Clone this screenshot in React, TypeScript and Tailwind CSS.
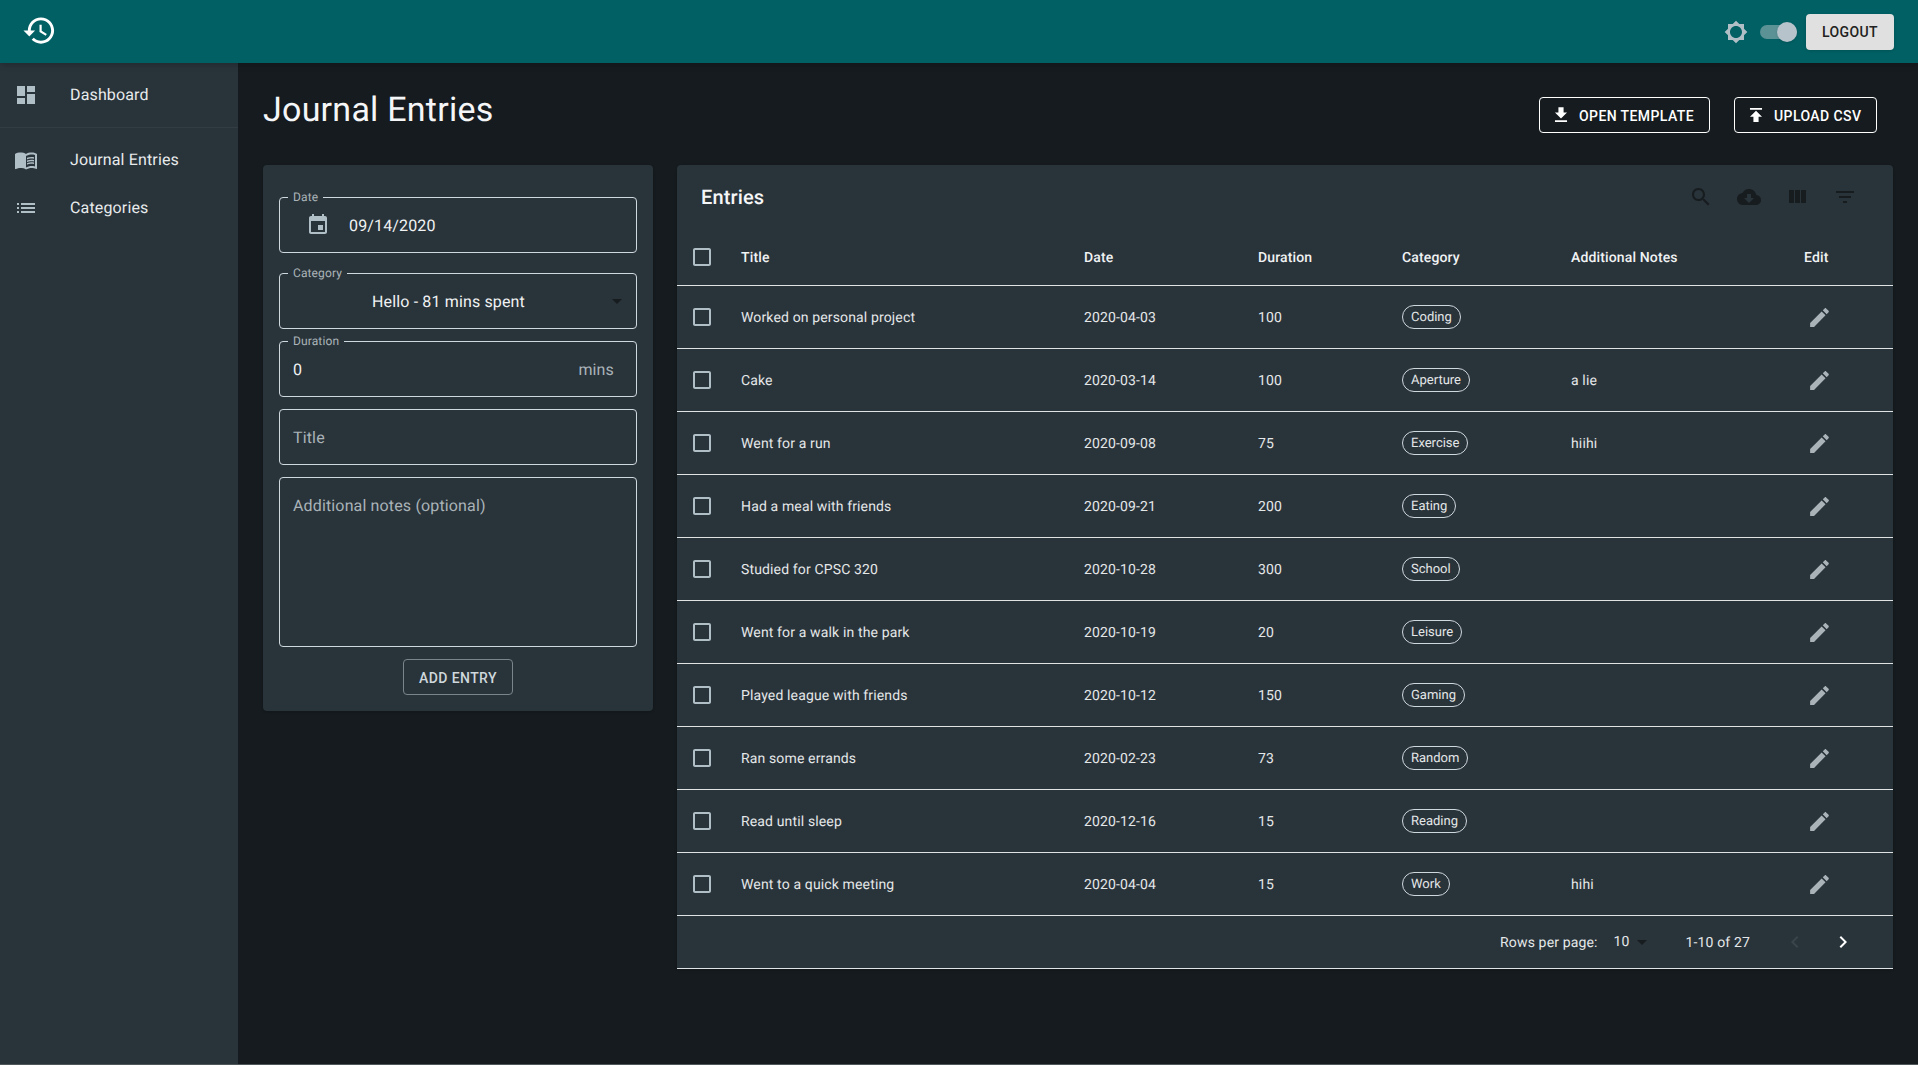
import { ReactNode } from 'react';

const paths = {
  history:
    'M13 3c-4.97 0-9 4.03-9 9H1l3.89 3.89.07.14L9 12H6c0-3.87 3.13-7 7-7s7 3.13 7 7-3.13 7-7 7c-1.93 0-3.68-.79-4.94-2.06l-1.42 1.42C8.27 19.99 10.51 21 13 21c4.97 0 9-4.03 9-9s-4.03-9-9-9zm-1 5v5l4.28 2.54.72-1.21-3.5-2.08V8H12z',
  dashboard: 'M3 13h8V3H3v10zm0 8h8v-6H3v6zm10 0h8V11h-8v10zm0-18v6h8V3h-8z',
  book: 'M21 5c-1.11-.35-2.33-.5-3.5-.5-1.95 0-4.05.4-5.5 1.5-1.45-1.1-3.55-1.5-5.5-1.5S2.45 4.9 1 6v14.65c0 .25.25.5.5.5.1 0 .15-.05.25-.05C3.1 20.45 5.05 20 6.5 20c1.95 0 4.05.4 5.5 1.5 1.35-.85 3.8-1.5 5.5-1.5 1.65 0 3.35.3 4.75 1.05.1.05.15.05.25.05.25 0 .5-.25.5-.5V6c-.6-.45-1.25-.75-2-1zm0 13.5c-1.1-.35-2.3-.5-3.5-.5-1.7 0-4.15.65-5.5 1.5V8c1.35-.85 3.8-1.5 5.5-1.5 1.2 0 2.4.15 3.5.5v11.5z M17.5 10.5c.88 0 1.73.09 2.5.26V9.24c-.79-.15-1.64-.24-2.5-.24-1.7 0-3.24.29-4.5.83v1.66c1.13-.64 2.7-.99 4.5-.99zM13 12.49v1.66c1.13-.64 2.7-.99 4.5-.99.88 0 1.73.09 2.5.26V11.9c-.79-.15-1.64-.24-2.5-.24-1.7 0-3.24.3-4.5.83zM17.5 14.33c-1.7 0-3.24.29-4.5.83v1.66c1.13-.64 2.7-.99 4.5-.99.88 0 1.73.09 2.5.26v-1.52c-.79-.16-1.64-.24-2.5-.24z',
  list: 'M3 13h2v-2H3v2zm0 4h2v-2H3v2zm0-8h2V7H3v2zm4 4h14v-2H7v2zm0 4h14v-2H7v2zM7 7v2h14V7H7z',
  brightness:
    'M20 15.31L23.31 12 20 8.69V4h-4.69L12 .69 8.69 4H4v4.69L.69 12 4 15.31V20h4.69L12 23.31 15.31 20H20v-4.69zM12 18c-3.31 0-6-2.69-6-6s2.69-6 6-6 6 2.69 6 6-2.69 6-6 6z',
  getApp: 'M19 9h-4V3H9v6H5l7 7 7-7zM5 18v2h14v-2H5z',
  publish: 'M5 4v2h14V4H5zm0 10h4v6h6v-6h4l-7-7-7 7z',
  search:
    'M15.5 14h-.79l-.28-.27C15.41 12.59 16 11.11 16 9.5 16 5.91 13.09 3 9.5 3S3 5.91 3 9.5 5.91 16 9.5 16c1.61 0 3.09-.59 4.23-1.57l.27.28v.79l5 4.99L20.49 19l-4.99-5zm-6 0C7.01 14 5 11.99 5 9.5S7.01 5 9.5 5 14 7.01 14 9.5 11.99 14 9.5 14z',
  cloud:
    'M19.35 10.04C18.67 6.59 15.64 4 12 4 9.11 4 6.6 5.64 5.35 8.04 2.34 8.36 0 10.91 0 14c0 3.31 2.69 6 6 6h13c2.76 0 5-2.24 5-5 0-2.64-2.05-4.78-4.65-4.96zM17 13l-5 5-5-5h3V9h4v4h3z',
  columns: 'M10 18h5V5h-5v13zm-6 0h5V5H4v13zM16 5v13h5V5h-5z',
  filter: 'M10 18h4v-2h-4v2zM3 6v2h18V6H3zm3 7h12v-2H6v2z',
  edit: 'M3 17.25V21h3.75L17.81 9.94l-3.75-3.75L3 17.25zM20.71 7.04c.39-.39.39-1.02 0-1.41l-2.34-2.34c-.39-.39-1.02-.39-1.41 0l-1.83 1.83 3.75 3.75 1.83-1.83z',
  event:
    'M17 12h-5v5h5v-5zM16 1v2H8V1H6v2H5c-1.11 0-1.99.9-1.99 2L3 19c0 1.1.89 2 2 2h14c1.1 0 2-.9 2-2V5c0-1.1-.9-2-2-2h-1V1h-2zm3 18H5V8h14v11z',
  checkbox:
    'M19 5v14H5V5h14m0-2H5c-1.1 0-2 .9-2 2v14c0 1.1.9 2 2 2h14c1.1 0 2-.9 2-2V5c0-1.1-.9-2-2-2z',
  dropdown: 'M7 10l5 5 5-5z',
  chevronLeft: 'M15.41 7.41L14 6l-6 6 6 6 1.41-1.41L10.83 12z',
  chevronRight: 'M10 6L8.59 7.41 13.17 12l-4.58 4.58L10 18l6-6z',
};

function Icon({ name, className }: { name: keyof typeof paths; className?: string }) {
  return (
    <svg viewBox="0 0 24 24" fill="currentColor" className={className ?? 'h-6 w-6 shrink-0'}>
      <path d={paths[name]} />
    </svg>
  );
}

const entries = [
  { title: 'Worked on personal project', date: '2020-04-03', duration: 100, category: 'Coding', notes: '' },
  { title: 'Cake', date: '2020-03-14', duration: 100, category: 'Aperture', notes: 'a lie' },
  { title: 'Went for a run', date: '2020-09-08', duration: 75, category: 'Exercise', notes: 'hiihi' },
  { title: 'Had a meal with friends', date: '2020-09-21', duration: 200, category: 'Eating', notes: '' },
  { title: 'Studied for CPSC 320', date: '2020-10-28', duration: 300, category: 'School', notes: '' },
  { title: 'Went for a walk in the park', date: '2020-10-19', duration: 20, category: 'Leisure', notes: '' },
  { title: 'Played league with friends', date: '2020-10-12', duration: 150, category: 'Gaming', notes: '' },
  { title: 'Ran some errands', date: '2020-02-23', duration: 73, category: 'Random', notes: '' },
  { title: 'Read until sleep', date: '2020-12-16', duration: 15, category: 'Reading', notes: '' },
  { title: 'Went to a quick meeting', date: '2020-04-04', duration: 15, category: 'Work', notes: 'hihi' },
];

const rowGrid = 'grid grid-cols-[64px_343px_174px_144px_169px_233px_1fr] items-center';

function Field({ label, className, children }: { label?: string; className: string; children?: ReactNode }) {
  return (
    <div className={`relative rounded border border-[#cfd8dc] ${className}`}>
      {label && (
        <span className="absolute -top-[8px] left-[8px] bg-[#29333a] px-[5px] text-xs leading-[14px] tracking-[0.01em] text-[#a9b3b8]">
          {label}
        </span>
      )}
      {children}
    </div>
  );
}

function NavItem({ icon, text, className }: { icon: keyof typeof paths; text: string; className: string }) {
  return (
    <div className={`flex items-center pl-[14px] ${className}`}>
      <Icon name={icon} className="h-6 w-6 shrink-0 text-[#b0bec5]" />
      <span className="ml-[32px] text-base tracking-[0.009em] text-[#e8ebec]">{text}</span>
    </div>
  );
}

function OutlineButton({ icon, text, className }: { icon: keyof typeof paths; text: string; className: string }) {
  return (
    <button className={`flex h-[36px] items-center rounded border border-white pl-[12px] text-sm font-medium tracking-[0.029em] text-white ${className}`}>
      <Icon name={icon} className="mr-[9px] h-[18px] w-[18px] shrink-0 scale-[1.15]" />
      <span className="pt-[2px]">{text}</span>
    </button>
  );
}

function EntryRow({ entry }: { entry: (typeof entries)[number] }) {
  return (
    <div className={`${rowGrid} h-[63px] border-b border-[#e0e3e4] text-sm tracking-[0.01em] text-[#e4e7e8]`}>
      <div className="pl-[13px]">
        <Icon name="checkbox" className="h-6 w-6 text-[#b0bec5]" />
      </div>
      <div className="pt-[2px]">{entry.title}</div>
      <div className="pt-[2px]">{entry.date}</div>
      <div className="pt-[2px]">{entry.duration}</div>
      <div>
        <span className="inline-flex h-[24px] items-center rounded-full border border-[#cfd8dc] px-[8px] text-[13px] leading-none tracking-normal">
          {entry.category}
        </span>
      </div>
      <div className="pt-[2px]">{entry.notes}</div>
      <div className="pl-[3px]">
        <Icon name="edit" className="h-[25px] w-[25px] text-[#a9b3b8]" />
      </div>
    </div>
  );
}

export default function App() {
  return (
    <div className="flex min-h-[1065px] flex-col border-b border-[#50575a] bg-[#151b1e] font-['Roboto',sans-serif] [text-rendering:geometricPrecision]">
      <header className="z-10 flex h-[63px] items-center justify-between bg-[#006064] pl-[22px] pr-[24px] shadow-md">
        <Icon name="history" className="mb-[3px] h-[35px] w-[35px] text-white" />
        <div className="flex items-center">
          <Icon name="brightness" className="h-6 w-6 text-[#b0bec5]" />
          <div className="relative ml-[12px] mr-[9px] h-[14px] w-[37px] rounded-full bg-[#5b9296]">
            <span className="absolute -top-[3px] right-0 h-[20px] w-[20px] rounded-full bg-[#b6c3ca] shadow" />
          </div>
          <button className="h-[36px] w-[88px] rounded bg-[#e0e0e0] text-sm font-medium tracking-[0.029em] text-[#212121] shadow">
            LOGOUT
          </button>
        </div>
      </header>

      <div className="flex flex-1">
        <aside className="w-[238px] shrink-0 bg-[#29333a]">
          <NavItem icon="dashboard" text="Dashboard" className="h-[65px] border-b border-[#323c42]" />
          <div className="pt-[8px]">
            <NavItem icon="book" text="Journal Entries" className="h-[48px]" />
            <NavItem icon="list" text="Categories" className="h-[48px]" />
          </div>
        </aside>

        <main className="flex-1 px-[25px]">
          <div className="flex h-[102px] items-start justify-between">
            <h1 className="pt-[24px] text-[34px] leading-[46px] tracking-[0.007em] text-[#f5f6f7]">Journal Entries</h1>
            <div className="flex gap-[24px] pt-[34px] pr-[16px]">
              <OutlineButton icon="getApp" text="OPEN TEMPLATE" className="w-[171px]" />
              <OutlineButton icon="publish" text="UPLOAD CSV" className="w-[143px]" />
            </div>
          </div>

          <div className="flex items-start gap-[24px]">
            <section className="flex w-[390px] shrink-0 flex-col rounded bg-[#29333a] px-[16px] pb-[16px] pt-[32px] shadow">
              <Field label="Date" className="flex h-[56px] items-center pl-[26px]">
                <Icon name="event" className="h-6 w-6 text-[#b0bec5]" />
                <span className="ml-[19px] pt-[2px] text-base tracking-[0.009em] text-[#f0f2f3]">09/14/2020</span>
              </Field>
              <Field label="Category" className="mt-[20px] flex h-[56px] items-center pl-[92px]">
                <span className="pt-[2px] text-base tracking-[0.009em] text-[#f0f2f3]">Hello - 81 mins spent</span>
                <Icon name="dropdown" className="absolute right-[7px] top-[15px] h-6 w-6 text-[#171c1f]" />
              </Field>
              <Field label="Duration" className="mt-[12px] flex h-[56px] items-center justify-between pl-[13px] pr-[22px]">
                <span className="pt-[2px] text-base text-[#f0f2f3]">0</span>
                <span className="pt-[2px] text-base tracking-[0.009em] text-[#a9b3b8]">mins</span>
              </Field>
              <Field className="mt-[12px] flex h-[56px] items-center pl-[13px]">
                <span className="pt-[2px] text-base tracking-[0.009em] text-[#a9b3b8]">Title</span>
              </Field>
              <Field className="mt-[12px] h-[170px] pl-[13px] pt-[16px]">
                <span className="text-base tracking-[0.009em] text-[#a9b3b8]">Additional notes (optional)</span>
              </Field>
              <button className="mx-auto mt-[12px] h-[36px] w-[110px] rounded border border-[#7a858b] pt-[2px] text-sm font-medium tracking-[0.029em] text-[#cfd8dc]">
                ADD ENTRY
              </button>
            </section>

            <section className="flex-1 rounded-t bg-[#29333a] shadow">
              <div className="flex h-[64px] items-center justify-between pl-[24px] pr-[36px]">
                <h2 className="text-xl font-medium tracking-[0.0075em] text-[#f5f6f7]">Entries</h2>
                <div className="flex gap-[24px] text-[#171c1f]">
                  <Icon name="search" />
                  <Icon name="cloud" />
                  <Icon name="columns" />
                  <Icon name="filter" />
                </div>
              </div>
              <div className={`${rowGrid} h-[57px] border-b border-[#e0e3e4] text-sm font-medium tracking-[0.01em] text-[#f0f2f3]`}>
                <div className="pl-[13px]">
                  <Icon name="checkbox" className="h-6 w-6 text-[#b0bec5]" />
                </div>
                <div className="pt-[2px]">Title</div>
                <div className="pt-[2px]">Date</div>
                <div className="pt-[2px]">Duration</div>
                <div className="pt-[2px]">Category</div>
                <div className="pt-[2px]">Additional Notes</div>
                <div className="pt-[2px]">Edit</div>
              </div>
              {entries.map((entry) => (
                <EntryRow key={entry.title} entry={entry} />
              ))}
              <div className="flex h-[53px] items-center justify-end border-b border-[#e0e3e4] pr-[38px] text-sm tracking-[0.01em] text-[#e4e7e8]">
                <span className="pt-[2px]">Rows per page:</span>
                <span className="ml-[16px]">10</span>
                <Icon name="dropdown" className="h-6 w-6 text-[#171c1f]" />
                <span className="ml-[32px] pt-[2px]">1-10 of 27</span>
                <Icon name="chevronLeft" className="ml-[33px] h-6 w-6 text-[#3a454b]" />
                <Icon name="chevronRight" className="ml-[24px] h-6 w-6 text-white" />
              </div>
            </section>
          </div>
        </main>
      </div>
    </div>
  );
}
